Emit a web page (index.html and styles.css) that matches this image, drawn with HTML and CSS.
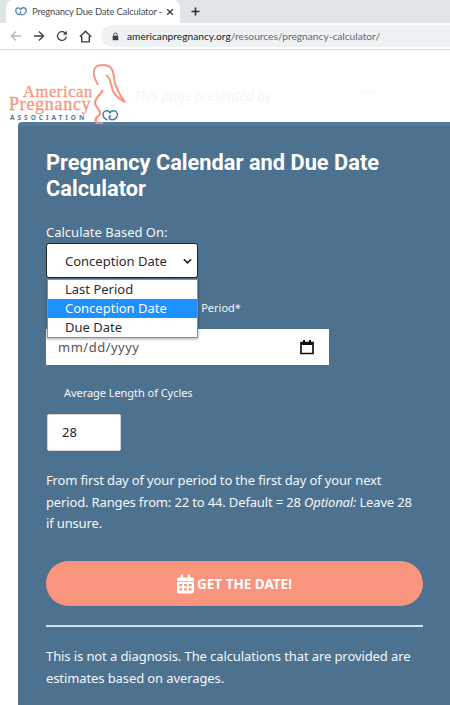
FILE: index.html
```html
<!DOCTYPE html>
<html lang="en">
<head>
<meta charset="utf-8">
<title>Pregnancy Due Date Calculator</title>
<link rel="stylesheet" href="styles.css">
</head>
<body>
<div class="tabstrip">
  <div class="tab">
    <svg class="favicon" viewBox="0 0 16 12" width="12" height="9"><path d="M6.500 10.500C3.500 9.500 1 7 1 4.500 1 2.500 2.600 1.200 4.300 1.200c1.400 0 2.600.8 3.200 2 .8-1.300 2-2.200 3.600-2.200C13 1 15 2.600 15 5c0 3-3 5.500-5.500 5.500-1.600 0-2.700-1-2.700-2.300 0-1.100.8-1.900 1.800-1.900" fill="none" stroke="#4a86b8" stroke-width="1.700"/></svg>
    <span class="tab-title">Pregnancy Due Date Calculator -</span>
    <svg class="tab-close" viewBox="0 0 10 10" width="8" height="8"><path d="M1.500 1.500l7 7M8.500 1.500l-7 7" stroke="#3c4043" stroke-width="1.800"/></svg>
  </div>
  <svg class="newtab" viewBox="0 0 10 10" width="9" height="9"><path d="M5 .5v9M.5 5h9" stroke="#2f3336" stroke-width="1.800"/></svg>
</div>
<div class="toolbar">
  <svg class="nav" viewBox="0 0 12 12" width="12" height="12"><path d="M11 6H1.500M6 1.500L1.500 6 6 10.500" fill="none" stroke="#b4b8bb" stroke-width="1.300"/></svg>
  <svg class="nav" viewBox="0 0 12 12" width="12" height="12"><path d="M1 6h9.500M6 1.500L10.500 6 6 10.500" fill="none" stroke="#3c4043" stroke-width="1.300"/></svg>
  <svg class="nav" viewBox="0 0 12 12" width="12" height="12"><path d="M10.300 6.500A4.400 4.400 0 1 1 9 2.900" fill="none" stroke="#3c4043" stroke-width="1.300"/><path d="M10.800 .8v4H6.800z" fill="#3c4043"/></svg>
  <svg class="nav" viewBox="0 0 12 12" width="13" height="13"><path d="M.8 6.300L6 1.200l5.200 5.100M2.500 5.500v5.500h7V5.500" fill="none" stroke="#3c4043" stroke-width="1.300"/></svg>
  <div class="omnibox">
    <svg viewBox="0 0 10 12" width="7" height="9"><path d="M2.500 5V3.500a2.500 2.500 0 0 1 5 0V5" fill="none" stroke="#3c4043" stroke-width="1.400"/><rect x="1" y="5" width="8" height="6.500" rx="1" fill="#3c4043"/></svg>
    <span class="url"><span class="host">americanpregnancy.org</span>/resources/pregnancy-calculator/</span>
  </div>
</div>
<header class="site-head">
  <div class="logo">
    <svg class="logo-art" viewBox="0 0 36 60" width="36" height="60"><path d="M5 21C1 14-1 8 2 4 5 0 15 0 18 4c4 4 2 12 5 18 2 6 5 11 9 16-6-3-10-7-12-11-2-5-2-13-7-16" fill="none" stroke="#f7967f" stroke-width="2"/><path d="M10 26C8 30 2 34 2 39c1 5 6 7 5 11-2 3-6 4-4 8 2 2 5 2 7 1" fill="none" stroke="#f7967f" stroke-width="2.200"/><path d="M14.500 56c-3-1.300-4.500-3-4.500-5.300 0-2.400 2-3.900 3.800-3.900 1.400 0 2.700.8 3.200 2 .7-1.300 2-2 3.500-2 2.200 0 4 1.700 4 4 0 3-3 5-5.500 5-1.600 0-2.700-1-2.700-2.200 0-1 .8-1.800 1.800-1.800" fill="none" stroke="#4a7c9e" stroke-width="1.500"/></svg>
    <div class="logo-line logo-american">American</div>
    <div class="logo-line logo-pregnancy">Pregnancy</div>
    <div class="logo-line logo-assoc">ASSOCIATION</div>
  </div>
  <span class="ghost">This page presented by</span>
  <span class="ghost-small">· · · · ·</span>
</header>
<main class="card">
  <h1>Pregnancy Calendar and Due Date Calculator</h1>
  <label class="based">Calculate Based On:</label>
  <div class="select-wrap">
    <div class="select-box">
      <span>Conception Date</span>
      <svg viewBox="0 0 10 6" width="9" height="6"><path d="M1 1l4 4 4-4" fill="none" stroke="#1c1c1c" stroke-width="1.800"/></svg>
    </div>
    <ul class="options">
      <li>Last Period</li>
      <li class="selected">Conception Date</li>
      <li>Due Date</li>
    </ul>
  </div>
  <label class="first-day">First Day of Last Period*</label>
  <div class="date-box">
    <span>mm/dd/yyyy</span>
    <svg viewBox="0 0 16 16" width="16" height="16"><path d="M2 3.500h12v11H2z" fill="none" stroke="#111" stroke-width="1.700"/><path d="M2 3h12v3H2zM4 1h2v3H4zM10 1h2v3h-2z" fill="#111"/></svg>
  </div>
  <label class="cycles">Average Length of Cycles</label>
  <div class="number-box">28</div>
  <p class="help">From first day of your period to the first day of your next period. Ranges from: 22 to 44. Default = 28 <em>Optional:</em> Leave 28 if unsure.</p>
  <button class="cta" type="button">
    <svg viewBox="0 0 18 20" width="17" height="20"><path fill="#fff" d="M4 0h2.500v3H11.500V0H14v3h2a2 2 0 0 1 2 2v2H0V5a2 2 0 0 1 2-2h2zM0 8h18v10a2 2 0 0 1-2 2H2a2 2 0 0 1-2-2z"/><path fill="#f9957f" d="M2.500 10h3v2.500h-3zM7.500 10h3v2.500h-3zM12.500 10h3v2.500h-3zM2.500 14.500h3V17h-3zM7.500 14.500h3V17h-3zM12.500 14.500h3V17h-3z"/></svg>
    <span>GET THE DATE!</span>
  </button>
  <hr>
  <p class="note">This is not a diagnosis. The calculations that are provided are estimates based on averages.</p>
</main>
</body>
</html>
```
FILE: styles.css
```css
* { box-sizing: border-box; }
html, body { margin: 0; height: 705px; overflow: hidden; background: #fff; }
body { font-family: "Noto Sans", "Open Sans", sans-serif; }

.tabstrip { height: 23px; background: #dfe4e7; display: flex; align-items: center; padding-left: 6px; }
.tab { flex: none; width: 174px; height: 23px; background: #fff; border-radius: 7px 7px 0 0; display: flex; align-items: center; padding-left: 9px; }
.favicon { flex: none; }
.tab-title { flex: none; font: 9.500px Lato, sans-serif; letter-spacing: -.2px; color: #4a4d50; margin-left: 5px; white-space: nowrap; width: 132px; }
.tab-close { flex: none; margin-left: 2px; }
.newtab { flex: none; margin-left: 11px; }

.toolbar { height: 27px; border-bottom: 1px solid #d9dcde; display: flex; align-items: center; padding-left: 10px; gap: 11px; }
.nav { flex: none; }
.omnibox { margin-left: -2px; flex: 1; height: 22px; background: #eef2f4; border-radius: 11px 0 0 11px; display: flex; align-items: center; padding-left: 11px; gap: 8px; }
.url { font: 10.200px Lato, sans-serif; color: #5f6a70; white-space: nowrap; }
.host { color: #202124; }

.site-head { height: 72px; position: relative; }
.logo { position: absolute; left: 9px; top: 14px; width: 118px; height: 60px; }
.logo-art { position: absolute; left: 84px; top: 0; }
.logo-line { white-space: nowrap; position: absolute; }
.logo-american, .logo-pregnancy { font-family: "Liberation Serif", serif; color: #f7967f; font-weight: 400; -webkit-text-stroke: .3px #f7967f; }
.logo-american { left: 14px; top: 20px; font-size: 16.500px; line-height: 16px; letter-spacing: .6px; }
.logo-pregnancy { left: 0; top: 32px; font-size: 18px; line-height: 17px; letter-spacing: .7px; }
.logo-assoc { left: 1px; top: 49px; font: 700 6.500px/9px "Noto Sans", sans-serif; letter-spacing: 3px; color: #4a7c9e; }
.ghost { position: absolute; left: 134px; top: 37px; font: italic 13.500px "Noto Sans", sans-serif; color: #f3f5f6; white-space: nowrap; }
.ghost-small { position: absolute; left: 356px; top: 37px; font-size: 8px; color: #e9ecee; white-space: nowrap; }

.card { height: 583px; margin-left: 18px; background: #4c728f; border-top: 4px solid #557a9a; border-radius: 4px 0 0 0; padding: 24px 27px 0 28px; color: #f4f7f9; }
h1 { margin: 0; font: 700 21.800px/26px Roboto, sans-serif; color: #fff; }
label { display: block; }
.based { margin-top: 21px; font-size: 13px; line-height: 19px; }
.select-wrap { position: relative; margin-top: 1px; width: 152px; }
.select-box { height: 35px; background: #fff; border: 1px solid #222; border-radius: 3px; color: #2b2b33; font-size: 13px; display: flex; align-items: center; justify-content: space-between; padding: 0 5px 0 18px; }
.options { position: absolute; left: 1px; top: 36px; width: 151px; margin: 0; padding: 0; list-style: none; background: #fff; border: 1px solid #8a8f93; box-shadow: 0 1px 3px rgba(0,0,0,.35); color: #2b2b33; font-size: 13px; z-index: 2; }
.options li { height: 19px; line-height: 18px; padding-left: 17px; }
.options .selected { background: #1e90ff; color: #fff; }
.first-day { margin-top: 21px; font-size: 11px; line-height: 17px; padding-left: 70px; }
.date-box { margin-top: 13px; width: 283px; height: 36px; background: #fff; display: flex; align-items: center; justify-content: space-between; padding: 0 14px 0 12px; color: #555; font-size: 13px; letter-spacing: .5px; }
.cycles { margin-top: 20px; padding-left: 18px; font-size: 11px; line-height: 16px; letter-spacing: -.05px; }
.number-box { margin: 13px 0 0 1px; width: 74px; height: 37px; background: #fff; border: 1px solid #d5d5d5; border-radius: 2px; color: #222; font-size: 13px; line-height: 35px; padding-left: 14px; }
.help { margin: 19px 0 0; max-width: 372px; font-size: 13px; line-height: 21.700px; letter-spacing: -.15px; }
.cta { margin-top: 26px; width: 377px; height: 45px; border: 0; border-radius: 23px; background: #f9957f; color: #fff; font: 700 13.500px "Noto Sans", sans-serif; display: flex; align-items: center; justify-content: center; gap: 3px; padding: 0; }
hr { margin: 19px 0 0; width: 377px; height: 2px; border: 0; background: #cfe3ef; }
.note { margin: 19px 0 0; font-size: 13px; line-height: 21.700px; letter-spacing: -.1px; }
```
